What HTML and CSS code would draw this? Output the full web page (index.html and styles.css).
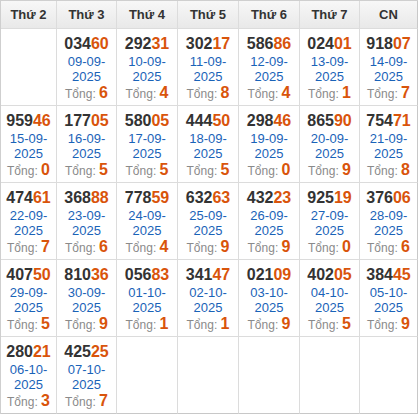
FILE: index.html
```html
<!DOCTYPE html>
<html lang="vi">
<head>
<meta charset="utf-8">
<title>Lịch kết quả</title>
<link rel="stylesheet" href="styles.css">
</head>
<body>
<div class="cal">
  <div class="hd">Thứ 2</div>
  <div class="hd">Thứ 3</div>
  <div class="hd">Thứ 4</div>
  <div class="hd">Thứ 5</div>
  <div class="hd">Thứ 6</div>
  <div class="hd">Thứ 7</div>
  <div class="hd last">CN</div>

  <div class="day"></div>
  <div class="day"><div class="num">034<b>60</b></div><div class="date">09-09-<br>2025</div><div class="sum"><span class="lbl">Tổng:</span> <b>6</b></div></div>
  <div class="day"><div class="num">292<b>31</b></div><div class="date">10-09-<br>2025</div><div class="sum"><span class="lbl">Tổng:</span> <b>4</b></div></div>
  <div class="day"><div class="num">302<b>17</b></div><div class="date">11-09-<br>2025</div><div class="sum"><span class="lbl">Tổng:</span> <b>8</b></div></div>
  <div class="day"><div class="num">586<b>86</b></div><div class="date">12-09-<br>2025</div><div class="sum"><span class="lbl">Tổng:</span> <b>4</b></div></div>
  <div class="day"><div class="num">024<b>01</b></div><div class="date">13-09-<br>2025</div><div class="sum"><span class="lbl">Tổng:</span> <b>1</b></div></div>
  <div class="day last"><div class="num">918<b>07</b></div><div class="date">14-09-<br>2025</div><div class="sum"><span class="lbl">Tổng:</span> <b>7</b></div></div>

  <div class="day"><div class="num">959<b>46</b></div><div class="date">15-09-<br>2025</div><div class="sum"><span class="lbl">Tổng:</span> <b>0</b></div></div>
  <div class="day"><div class="num">177<b>05</b></div><div class="date">16-09-<br>2025</div><div class="sum"><span class="lbl">Tổng:</span> <b>5</b></div></div>
  <div class="day"><div class="num">580<b>05</b></div><div class="date">17-09-<br>2025</div><div class="sum"><span class="lbl">Tổng:</span> <b>5</b></div></div>
  <div class="day"><div class="num">444<b>50</b></div><div class="date">18-09-<br>2025</div><div class="sum"><span class="lbl">Tổng:</span> <b>5</b></div></div>
  <div class="day"><div class="num">298<b>46</b></div><div class="date">19-09-<br>2025</div><div class="sum"><span class="lbl">Tổng:</span> <b>0</b></div></div>
  <div class="day"><div class="num">865<b>90</b></div><div class="date">20-09-<br>2025</div><div class="sum"><span class="lbl">Tổng:</span> <b>9</b></div></div>
  <div class="day last"><div class="num">754<b>71</b></div><div class="date">21-09-<br>2025</div><div class="sum"><span class="lbl">Tổng:</span> <b>8</b></div></div>

  <div class="day"><div class="num">474<b>61</b></div><div class="date">22-09-<br>2025</div><div class="sum"><span class="lbl">Tổng:</span> <b>7</b></div></div>
  <div class="day"><div class="num">368<b>88</b></div><div class="date">23-09-<br>2025</div><div class="sum"><span class="lbl">Tổng:</span> <b>6</b></div></div>
  <div class="day"><div class="num">778<b>59</b></div><div class="date">24-09-<br>2025</div><div class="sum"><span class="lbl">Tổng:</span> <b>4</b></div></div>
  <div class="day"><div class="num">632<b>63</b></div><div class="date">25-09-<br>2025</div><div class="sum"><span class="lbl">Tổng:</span> <b>9</b></div></div>
  <div class="day"><div class="num">432<b>23</b></div><div class="date">26-09-<br>2025</div><div class="sum"><span class="lbl">Tổng:</span> <b>9</b></div></div>
  <div class="day"><div class="num">925<b>19</b></div><div class="date">27-09-<br>2025</div><div class="sum"><span class="lbl">Tổng:</span> <b>0</b></div></div>
  <div class="day last"><div class="num">376<b>06</b></div><div class="date">28-09-<br>2025</div><div class="sum"><span class="lbl">Tổng:</span> <b>6</b></div></div>

  <div class="day"><div class="num">407<b>50</b></div><div class="date">29-09-<br>2025</div><div class="sum"><span class="lbl">Tổng:</span> <b>5</b></div></div>
  <div class="day"><div class="num">810<b>36</b></div><div class="date">30-09-<br>2025</div><div class="sum"><span class="lbl">Tổng:</span> <b>9</b></div></div>
  <div class="day"><div class="num">056<b>83</b></div><div class="date">01-10-<br>2025</div><div class="sum"><span class="lbl">Tổng:</span> <b>1</b></div></div>
  <div class="day"><div class="num">341<b>47</b></div><div class="date">02-10-<br>2025</div><div class="sum"><span class="lbl">Tổng:</span> <b>1</b></div></div>
  <div class="day"><div class="num">021<b>09</b></div><div class="date">03-10-<br>2025</div><div class="sum"><span class="lbl">Tổng:</span> <b>9</b></div></div>
  <div class="day"><div class="num">402<b>05</b></div><div class="date">04-10-<br>2025</div><div class="sum"><span class="lbl">Tổng:</span> <b>5</b></div></div>
  <div class="day last"><div class="num">384<b>45</b></div><div class="date">05-10-<br>2025</div><div class="sum"><span class="lbl">Tổng:</span> <b>9</b></div></div>

  <div class="day bottom"><div class="num">280<b>21</b></div><div class="date">06-10-<br>2025</div><div class="sum"><span class="lbl">Tổng:</span> <b>3</b></div></div>
  <div class="day bottom"><div class="num">425<b>25</b></div><div class="date">07-10-<br>2025</div><div class="sum"><span class="lbl">Tổng:</span> <b>7</b></div></div>
  <div class="day bottom"></div>
  <div class="day bottom"></div>
  <div class="day bottom"></div>
  <div class="day bottom"></div>
  <div class="day bottom last"></div>
</div>
</body>
</html>
```
FILE: styles.css
```css
html, body {
  margin: 0;
  padding: 0;
  background: #ffffff;
}

.cal {
  display: grid;
  grid-template-columns: 56px 60px 61px 61px 61px 60px 58px;
  grid-template-rows: 28px repeat(5, 77px);
  width: 418px;
  box-sizing: border-box;
  border-top: 1px solid #cfcfcf;
  border-left: 1px solid #cfcfcf;
  font-family: "Liberation Sans", Arial, sans-serif;
  text-align: center;
}

.hd {
  box-sizing: border-box;
  border-right: 1px solid #dcdcdc;
  border-bottom: 1px solid #dcdcdc;
  background: linear-gradient(to bottom, #f7f7f7, #e9e9e9);
  color: #333333;
  font-weight: bold;
  font-size: 13px;
  line-height: 27px;
}

.day {
  box-sizing: border-box;
  border-right: 1px solid #dcdcdc;
  border-bottom: 1px solid #dcdcdc;
  padding: 4px 0 4px;
}

.hd.last,
.day.last {
  border-right-color: #c8c8c8;
}

.day.bottom {
  border-bottom-color: #c8c8c8;
}

.num {
  font-size: 16px;
  font-weight: bold;
  line-height: 21px;
  color: #333333;
}

.num b {
  color: #d9540b;
}

.date {
  font-size: 13px;
  line-height: 15px;
  color: #1a63b8;
}

.sum {
  line-height: 17px;
  font-size: 12px;
}

.lbl {
  color: #8a8a8a;
  font-size: 12px;
}

.sum b {
  color: #d9540b;
  font-size: 16px;
  font-weight: bold;
}
```
